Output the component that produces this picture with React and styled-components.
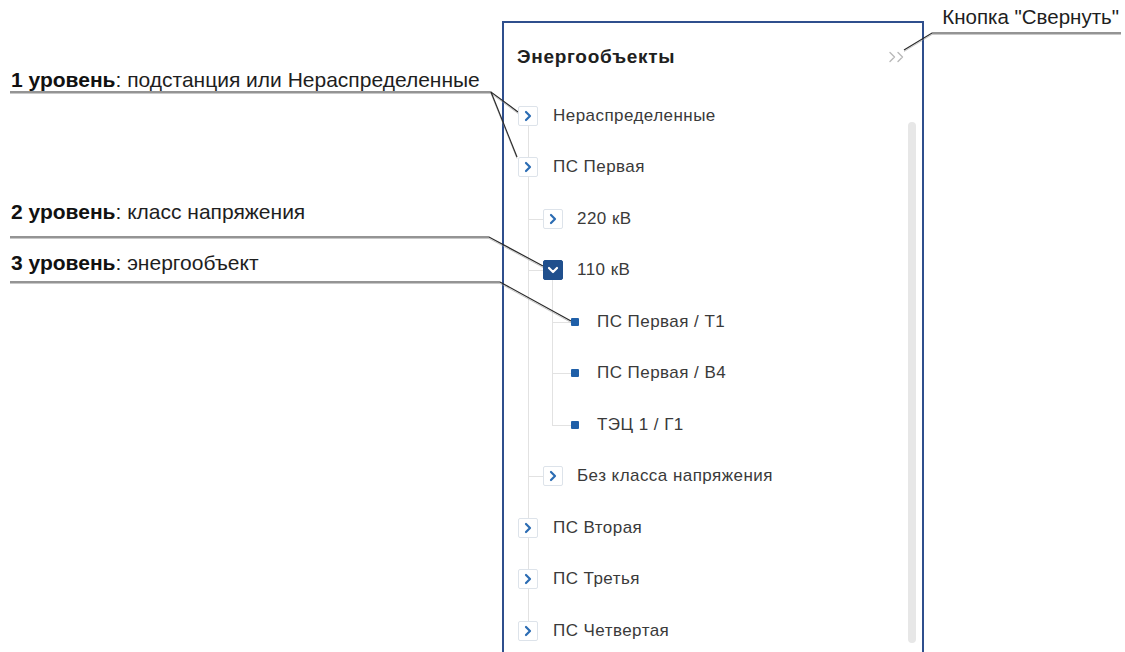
import React from 'react';
import styled, { createGlobalStyle } from 'styled-components';

const GlobalStyle = createGlobalStyle`
  html, body {
    margin: 0;
    padding: 0;
    background: #ffffff;
  }
  body {
    font-family: "Liberation Sans", Arial, sans-serif;
    color: #2b2b2b;
  }
`;

const Page = styled.div`
  position: relative;
  width: 1125px;
  height: 652px;
  overflow: hidden;
  display: flex;
  align-items: flex-start;
  background: #fff;
`;

/* ---------- callout captions ---------- */

const CaptionColumn = styled.div`
  width: 502px;
  flex: none;
  display: flex;
  flex-direction: column;
  padding-left: 11px;
  box-sizing: border-box;
`;

const Caption = styled.div`
  margin-top: ${(p) => p.$gap}px;
  height: 24px;
  line-height: 24px;
  font-size: 21px;
  color: #1e1e1e;
  white-space: nowrap;
`;

const CaptionKey = styled.b`
  font-weight: 700;
  color: #111;
`;

const NoteColumn = styled.div`
  flex: 1;
  display: flex;
  justify-content: flex-end;
  padding: 5px 6px 0 0;
`;

const Note = styled.div`
  font-size: 20.5px;
  line-height: 24px;
  color: #1e1e1e;
  white-space: nowrap;
`;

const Leaders = styled.svg`
  position: absolute;
  left: 0;
  top: 0;
  width: 1125px;
  height: 652px;
  pointer-events: none;
  overflow: visible;
`;

/* ---------- panel ---------- */

const Panel = styled.section`
  width: 422px;
  height: 660px;
  flex: none;
  margin-top: 21px;
  box-sizing: border-box;
  border: 2px solid #2f4f8d;
  border-bottom: none;
  background: #fff;
  display: flex;
  flex-direction: column;
`;

const PanelHeader = styled.header`
  height: 67px;
  flex: none;
  display: flex;
  align-items: center;
  justify-content: space-between;
  padding: 0 15px 0 13px;
`;

const PanelTitle = styled.h2`
  margin: 0;
  font-size: 19px;
  font-weight: 700;
  letter-spacing: 0.7px;
  color: #202020;
`;

const CollapseButton = styled.button`
  border: none;
  background: none;
  padding: 0;
  width: 20px;
  height: 14px;
  display: flex;
  align-items: center;
  justify-content: center;
  cursor: pointer;
  color: #b9b9b9;
`;

const PanelBody = styled.div`
  flex: 1;
  display: flex;
  align-items: flex-start;
`;

const ScrollTrack = styled.div`
  width: 8px;
  flex: none;
  margin: 32px 6px 0 0;
`;

const ScrollThumb = styled.div`
  height: 521px;
  border-radius: 4px;
  background: #e7e7e7;
`;

/* ---------- tree ---------- */

const LINE = '#e2e2e2';

const Tree = styled.div`
  position: relative;
  flex: 1;

  &::before {
    content: '';
    position: absolute;
    left: 24px;
    top: 25.75px;
    bottom: 25.75px;
    width: 1px;
    background: ${LINE};
  }
`;

const Branch = styled.div`
  position: relative;

  ${(p) =>
    p.$rail &&
    `
    &::before {
      content: '';
      position: absolute;
      left: 48px;
      top: -16px;
      bottom: 25.75px;
      width: 1px;
      background: ${LINE};
    }
  `}
`;

const INDENT = { 1: 14, 2: 39, 3: 67 };
const RAIL = { 2: 24, 3: 48 };
const TEXT_GAP = { 1: 15, 2: 14, 3: 18 };

const Row = styled.div`
  position: relative;
  height: 51.5px;
  display: flex;
  align-items: center;
  padding-left: ${(p) => INDENT[p.$level]}px;

  ${(p) =>
    p.$level > 1 &&
    `
    &::before {
      content: '';
      position: absolute;
      top: 50%;
      left: ${RAIL[p.$level]}px;
      width: ${INDENT[p.$level] - RAIL[p.$level]}px;
      height: 1px;
      background: ${LINE};
    }
  `}
`;

const Toggle = styled.span`
  position: relative;
  z-index: 1;
  width: 20px;
  height: 20px;
  flex: none;
  box-sizing: border-box;
  border-radius: 2px;
  display: flex;
  align-items: center;
  justify-content: center;
  border: 1px solid ${(p) => (p.$open ? '#1f4f8d' : '#dde3ea')};
  background: ${(p) => (p.$open ? '#1f4f8d' : '#ffffff')};
  color: ${(p) => (p.$open ? '#ffffff' : '#2b6cb3')};
`;

const LeafMark = styled.span`
  width: 8px;
  height: 8px;
  flex: none;
  background: #1f5fa8;
  border-radius: 1px;
`;

const NodeLabel = styled.span`
  margin-left: ${(p) => TEXT_GAP[p.$level]}px;
  font-size: 17px;
  letter-spacing: 0.45px;
  color: #3a3a3a;
  white-space: nowrap;
`;

const ChevronRight = () => (
  <svg width="10" height="12" viewBox="0 0 10 12" fill="none">
    <path d="M3 2l4 4-4 4" stroke="currentColor" strokeWidth="2.2" strokeLinecap="round" strokeLinejoin="round" />
  </svg>
);

const ChevronDown = () => (
  <svg width="12" height="10" viewBox="0 0 12 10" fill="none">
    <path d="M2 3l4 4 4-4" stroke="currentColor" strokeWidth="2.2" strokeLinecap="round" strokeLinejoin="round" />
  </svg>
);

const DoubleChevron = () => (
  <svg width="20" height="14" viewBox="0 0 20 14" fill="none">
    <path d="M3 2.5l4.5 4.5L3 11.5M11 2.5l4.5 4.5-4.5 4.5" stroke="currentColor" strokeWidth="1.4" strokeLinecap="round" strokeLinejoin="round" />
  </svg>
);

const objects = [
  { id: 'none', label: 'Нераспределенные' },
  {
    id: 'ps1',
    label: 'ПС Первая',
    children: [
      { id: 'ps1-220', label: '220 кВ' },
      {
        id: 'ps1-110',
        label: '110 кВ',
        open: true,
        children: [
          { id: 't1', label: 'ПС Первая / Т1', leaf: true },
          { id: 'b4', label: 'ПС Первая / В4', leaf: true },
          { id: 'g1', label: 'ТЭЦ 1 / Г1', leaf: true },
        ],
      },
      { id: 'ps1-none', label: 'Без класса напряжения' },
    ],
  },
  { id: 'ps2', label: 'ПС Вторая' },
  { id: 'ps3', label: 'ПС Третья' },
  { id: 'ps4', label: 'ПС Четвертая' },
];

function TreeNode({ node, level }) {
  return (
    <>
      <Row $level={level}>
        {node.leaf ? (
          <LeafMark />
        ) : (
          <Toggle $open={node.open}>{node.open ? <ChevronDown /> : <ChevronRight />}</Toggle>
        )}
        <NodeLabel $level={level}>{node.label}</NodeLabel>
      </Row>
      {node.children && (
        <Branch $rail={level >= 2}>
          {node.children.map((child) => (
            <TreeNode key={child.id} node={child} level={level + 1} />
          ))}
        </Branch>
      )}
    </>
  );
}

function Leader({ points }) {
  const pts = points.map((p) => p.join(',')).join(' ');
  const shadow = points.map(([x, y]) => `${x},${y + 1.5}`).join(' ');
  return (
    <>
      <polyline points={shadow} fill="none" stroke="#9a9a9a" strokeWidth="1" opacity="0.55" />
      <polyline points={pts} fill="none" stroke="#2a2a2a" strokeWidth="1.2" />
    </>
  );
}

export default function App() {
  return (
    <>
      <GlobalStyle />
      <Page>
        <CaptionColumn>
          <Caption $gap={68}>
            <CaptionKey>1 уровень</CaptionKey>: подстанция или Нераспределенные
          </Caption>
          <Caption $gap={108}>
            <CaptionKey>2 уровень</CaptionKey>: класс напряжения
          </Caption>
          <Caption $gap={27}>
            <CaptionKey>3 уровень</CaptionKey>: энергообъект
          </Caption>
        </CaptionColumn>

        <Panel>
          <PanelHeader>
            <PanelTitle>Энергообъекты</PanelTitle>
            <CollapseButton aria-label="Свернуть">
              <DoubleChevron />
            </CollapseButton>
          </PanelHeader>
          <PanelBody>
            <Tree>
              {objects.map((node) => (
                <TreeNode key={node.id} node={node} level={1} />
              ))}
            </Tree>
            <ScrollTrack>
              <ScrollThumb />
            </ScrollTrack>
          </PanelBody>
        </Panel>

        <NoteColumn>
          <Note>Кнопка "Свернуть"</Note>
        </NoteColumn>

        <Leaders viewBox="0 0 1125 652">
          <Leader points={[[10, 92], [491, 92], [518, 112]]} />
          <Leader points={[[491, 92], [517, 157]]} />
          <Leader points={[[10, 237], [489, 237], [543, 266]]} />
          <Leader points={[[10, 282], [500, 282], [571, 321]]} />
          <Leader points={[[1121, 33], [932, 33], [904, 50]]} />
        </Leaders>
      </Page>
    </>
  );
}
